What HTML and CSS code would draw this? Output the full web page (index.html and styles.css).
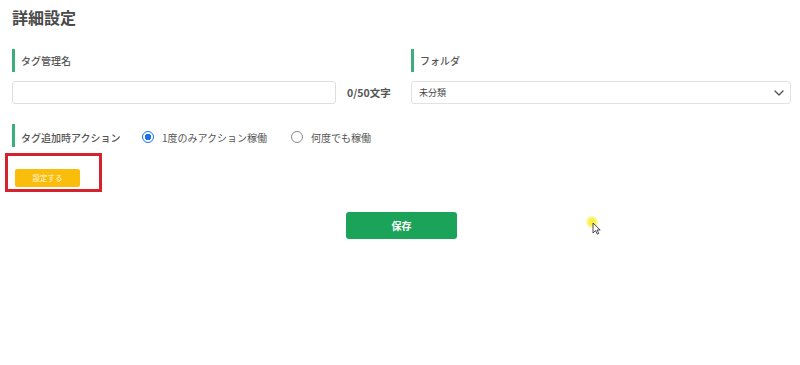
FILE: index.html
```html
<!DOCTYPE html>
<html lang="ja">
<head>
    <meta charset="utf-8">
    <title>詳細設定</title>
    <link rel="stylesheet" href="styles.css">
</head>
<body>
    <div class="page">
        <h1 class="title">詳細設定</h1>

        <div class="fields">
            <div class="field">
                <div class="label">タグ管理名</div>
                <div class="input-row">
                    <input class="text-input" type="text">
                    <span class="counter">0/50文字</span>
                </div>
            </div>
            <div class="field">
                <div class="label">フォルダ</div>
                <div class="select">
                    <span>未分類</span>
                    <svg class="chevron" width="10" height="6" viewBox="0 0 10 6">
                        <path d="M1 1 L5 5 L9 1" fill="none" stroke="#555" stroke-width="1.4" stroke-linecap="round" stroke-linejoin="round"/>
                    </svg>
                </div>
            </div>
        </div>

        <div class="action-row">
            <div class="label action-label">タグ追加時アクション</div>
            <label class="radio">
                <span class="radio-dot checked"></span>
                1度のみアクション稼働
            </label>
            <label class="radio">
                <span class="radio-dot"></span>
                何度でも稼働
            </label>
        </div>

        <div class="highlight">
            <button class="btn-set">設定する</button>
        </div>

        <div class="save-wrap">
            <button class="btn-save">保存</button>
        </div>
    </div>

    <!-- mouse pointer from the recording -->
    <div class="pointer">
        <span class="glow"></span>
        <svg class="arrow" width="9" height="13" viewBox="0 0 9 13">
            <path d="M1 1 L1 11 L3.5 8.6 L5.3 12.2 L6.8 11.5 L5 8 L8.2 8 Z" fill="#fff" stroke="#333" stroke-width="0.9" stroke-linejoin="round"/>
        </svg>
    </div>
</body>
</html>
```

FILE: styles.css
```css
* {
    margin: 0;
    padding: 0;
    box-sizing: border-box;
}
body {
    background: #ffffff;
    color: #555555;
    font-family: "Noto Sans CJK JP", "Noto Sans", sans-serif;
    width: 800px;
    height: 365px;
    overflow: hidden;
    position: relative;
}
.page {
    padding: 7px 9px 0 12px;
}
.title {
    font-size: 16px;
    line-height: 20px;
    font-weight: bold;
    color: #4a4a4a;
}

.fields {
    display: grid;
    grid-template-columns: 379px 380px;
    column-gap: 20px;
    margin-top: 22px;
}
.label {
    border-left: 3px solid #3cae7c;
    padding-left: 6px;
    height: 23px;
    display: flex;
    align-items: center;
    font-size: 10px;
    font-weight: 500;
    color: #555555;
}
.input-row {
    display: flex;
    align-items: center;
    margin-top: 9px;
}
.text-input {
    width: 324px;
    height: 23px;
    border: 1px solid #dedede;
    border-radius: 3px;
    outline: none;
}
.counter {
    margin-left: 11px;
    font-size: 10.5px;
    font-weight: bold;
    color: #555555;
}
.select {
    margin-top: 9px;
    height: 23px;
    border: 1px solid #e2e2e2;
    border-radius: 3px;
    display: flex;
    align-items: center;
    justify-content: space-between;
    padding: 0 6px 0 7px;
    font-size: 9px;
    color: #444444;
}

.action-row {
    display: flex;
    align-items: center;
    margin-top: 20px;
}
.action-label {
    width: 130px;
    padding-top: 3px;
}
.radio {
    display: flex;
    align-items: center;
    gap: 8px;
    font-size: 10px;
    color: #555555;
    padding-top: 3px;
    margin-right: 24px;
}
.radio-dot {
    width: 12px;
    height: 12px;
    border: 1px solid #8a8a8a;
    border-radius: 50%;
    background: #fff;
}
.radio-dot.checked {
    border: 1.5px solid #1a73e8;
    background: radial-gradient(circle, #1a73e8 0 3px, #fff 3.5px);
}

.highlight {
    width: 97px;
    height: 39px;
    margin: 6px 0 0 -7px;
    border: 3px solid #d6222c;
    padding: 6px 0 0 7px;
}
.btn-set {
    width: 65px;
    height: 18px;
    border: none;
    border-radius: 2px;
    background: #fbbd0b;
    color: #fff6dc;
    font-family: inherit;
    font-size: 7.5px;
}

.save-wrap {
    display: flex;
    justify-content: center;
    margin-top: 20px;
}
.btn-save {
    width: 111px;
    height: 27px;
    border: none;
    border-radius: 3px;
    background: #1ca35a;
    color: #ffffff;
    font-family: inherit;
    font-size: 10px;
    font-weight: bold;
}

.pointer {
    position: absolute;
    left: 584px;
    top: 214px;
    width: 18px;
    height: 18px;
}
.glow {
    position: absolute;
    left: 2px;
    top: 2px;
    width: 12px;
    height: 12px;
    border-radius: 50%;
    background: radial-gradient(circle, rgba(250, 240, 60, 0.95) 0 3px, rgba(250, 240, 80, 0.35) 6px);
}
.arrow {
    position: absolute;
    left: 8px;
    top: 8px;
}
```
